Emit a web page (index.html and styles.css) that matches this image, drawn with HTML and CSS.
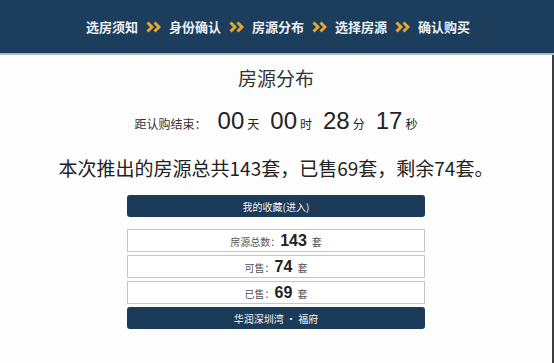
FILE: index.html
```html
<!DOCTYPE html>
<html lang="zh">
<head>
<meta charset="utf-8">
<title>房源分布</title>
<link rel="stylesheet" href="styles.css">
</head>
<body>
<div class="header">
  <span class="step">选房须知</span>
  <svg class="chev" viewBox="0 0 15 12" width="15" height="12"><path d="M1.5 1.5 L6 6 L1.5 10.5 M8.5 1.5 L13 6 L8.5 10.5"/></svg>
  <span class="step">身份确认</span>
  <svg class="chev" viewBox="0 0 15 12" width="15" height="12"><path d="M1.5 1.5 L6 6 L1.5 10.5 M8.5 1.5 L13 6 L8.5 10.5"/></svg>
  <span class="step">房源分布</span>
  <svg class="chev" viewBox="0 0 15 12" width="15" height="12"><path d="M1.5 1.5 L6 6 L1.5 10.5 M8.5 1.5 L13 6 L8.5 10.5"/></svg>
  <span class="step">选择房源</span>
  <svg class="chev" viewBox="0 0 15 12" width="15" height="12"><path d="M1.5 1.5 L6 6 L1.5 10.5 M8.5 1.5 L13 6 L8.5 10.5"/></svg>
  <span class="step">确认购买</span>
</div>
<div class="main">
  <div class="title">房源分布</div>
  <div class="countdown">
    <span class="cd-label">距认购结束：</span>
    <span class="cd-num">00</span><span class="cd-unit">天</span>
    <span class="cd-num">00</span><span class="cd-unit">时</span>
    <span class="cd-num">28</span><span class="cd-unit">分</span>
    <span class="cd-num">17</span><span class="cd-unit">秒</span>
  </div>
  <div class="headline">本次推出的房源总共143套，已售69套，剩余74套。</div>
  <div class="btn">我的收藏(进入)</div>
  <div class="stats">
    <div class="stat"><span class="st-label">房源总数：</span><span class="st-num">143</span><span class="st-unit">套</span></div>
    <div class="stat"><span class="st-label">可售：</span><span class="st-num">74</span><span class="st-unit">套</span></div>
    <div class="stat"><span class="st-label">已售：</span><span class="st-num">69</span><span class="st-unit">套</span></div>
    <div class="btn btn-project">华润深圳湾 · 福府</div>
  </div>
</div>
</body>
</html>
```
FILE: styles.css
```css
html, body {
  margin: 0;
  padding: 0;
}
body {
  width: 554px;
  height: 363px;
  overflow: hidden;
  background: #fdfdfd;
  font-family: "Noto Sans CJK SC", "Noto Sans", sans-serif;
  color: #2b2b2b;
}
.header {
  height: 53px;
  background: #1c3d5c;
  border-bottom: 2px solid #aebbc5;
  display: flex;
  align-items: center;
  justify-content: center;
  gap: 8px;
  padding-left: 2px;
}
.step {
  color: #eef1f4;
  font-size: 13px;
  font-weight: 600;
  line-height: 16px;
}
.chev path {
  fill: none;
  stroke: #e2a631;
  stroke-width: 3;
  stroke-linecap: butt;
  stroke-linejoin: miter;
}
.main {
  height: 308px;
  border-right: 2px solid #3d3d3d;
  display: flex;
  flex-direction: column;
  align-items: center;
}
.title {
  margin-top: 10px;
  font-size: 19px;
  line-height: 26px;
  color: #333;
}
.countdown {
  margin-top: 15px;
  height: 30px;
  display: flex;
  align-items: baseline;
  color: #222;
}
.cd-label {
  font-size: 12px;
  color: #333;
  margin-right: 11px;
}
.cd-num {
  font-family: "Liberation Sans", Arial, sans-serif;
  font-size: 24px;
  line-height: 30px;
  margin-right: 3px;
}
.cd-unit {
  font-size: 12px;
  margin-right: 11px;
}
.cd-unit:last-child {
  margin-right: 0;
}
.headline {
  margin-top: 19px;
  font-size: 19px;
  line-height: 26px;
  color: #222;
}
.btn {
  width: 298px;
  height: 22px;
  box-sizing: border-box;
  border-radius: 3px;
  background: #1c3b58;
  color: #f4f6f8;
  font-size: 10px;
  display: flex;
  align-items: center;
  justify-content: center;
  margin-top: 14px;
}
.stats {
  margin-top: 12px;
  width: 298px;
  display: flex;
  flex-direction: column;
  gap: 3px;
}
.stats .btn-project {
  margin-top: 0;
}
.stat {
  height: 23px;
  box-sizing: border-box;
  border: 1px solid #c6c6c6;
  background: #fff;
  display: flex;
  align-items: baseline;
  justify-content: center;
  line-height: 21px;
}
.st-label {
  font-size: 10px;
  color: #555;
}
.st-num {
  font-family: "Liberation Sans", Arial, sans-serif;
  font-size: 16px;
  font-weight: bold;
  color: #222;
  margin-right: 5px;
}
.st-unit {
  font-size: 10px;
  color: #555;
}
```
